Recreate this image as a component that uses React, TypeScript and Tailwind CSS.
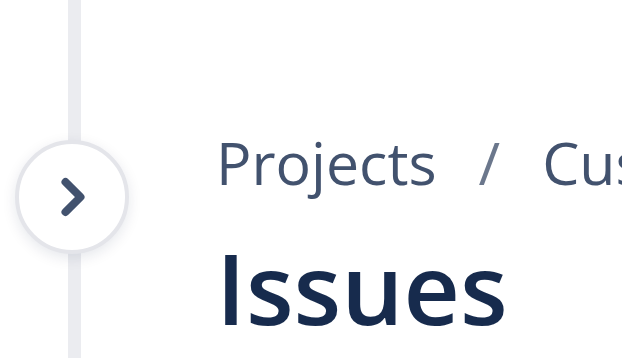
import { ChevronRight } from "lucide-react";

export default function App() {
  return (
    <div className="relative flex h-[358px] w-[622px] overflow-hidden bg-white" style={{ fontFamily: '"Open Sans", "Noto Sans", sans-serif' }}>
      {/* sidebar edge */}
      <div className="w-[81px] shrink-0 flex justify-end">
        <div className="w-[13px] h-full bg-[#ebecf0]" />
      </div>

      {/* expand button overlays the edge */}
      <button className="absolute left-[15px] top-[140px] w-[114px] h-[114px] rounded-full bg-white border-[4px] border-[#e4e5ea] shadow-[0_4px_14px_rgba(9,30,66,0.10)] flex items-center justify-center">
        <ChevronRight size={60} strokeWidth={3.2} className="text-[#42526e] ml-[2px]" />
      </button>

      <main className="flex-1 pl-[135px] pt-[122px] whitespace-nowrap">
        <nav className="flex items-center text-[59px] leading-[80px] text-[#42526e]">
          <span>Projects</span>
          <span className="mx-[42px] text-[#6b778c]">/</span>
          <span>Customer Support</span>
        </nav>
        <h1 className="mt-[25px] text-[98px] leading-[120px] font-semibold text-[#172b4d]">Issues</h1>
      </main>
    </div>
  );
}
